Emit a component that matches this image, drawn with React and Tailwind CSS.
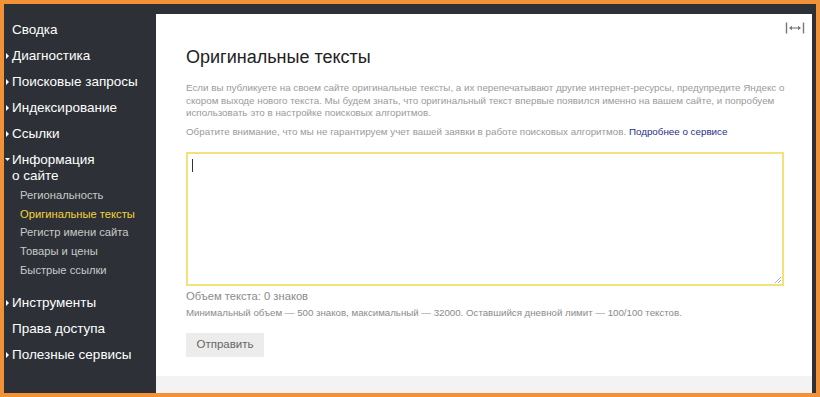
import React from "react";

const Tri = ({ open }) => (
  <span className="absolute left-[1px] top-[5px]">
    {open ? (
      <svg width="5" height="5" viewBox="0 0 5 5"><path d="M0 1 L5 1 L2.5 4 Z" fill="#fff" /></svg>
    ) : (
      <svg width="5" height="6" viewBox="0 0 5 6"><path d="M1 0 L4 3 L1 6 Z" fill="#fff" /></svg>
    )}
  </span>
);

const Top = ({ children, tri, open, cls = "" }) => (
  <div className={`relative pl-[8px] text-[13.5px] leading-[16px] text-white ${cls}`}>
    {tri && <Tri open={open} />}
    {children}
  </div>
);

export default function App() {
  return (
    <div
      className="w-[820px] h-[397px] bg-[#f29136] pt-[4px] pl-[4px] pr-[4px] pb-[4px]"
      style={{ fontFamily: '"Liberation Sans", Arial, sans-serif' }}
    >
      <div className="flex h-full bg-[#2d3137]">
        <div className="w-[152px] shrink-0 flex flex-col pt-[18px]">
          <Top cls="mb-[10px]">Сводка</Top>
          <Top tri cls="mb-[10px]">Диагностика</Top>
          <Top tri cls="mb-[10px]">Поисковые запросы</Top>
          <Top tri cls="mb-[10px]">Индексирование</Top>
          <Top tri cls="mb-[10px]">Ссылки</Top>
          <Top tri open cls="mb-[4px]">
            Информация
            <br />
            о сайте
          </Top>
          <div className="flex flex-col pl-[16px] text-[11.2px] leading-[14px] text-[#c9c9c9] gap-[4.7px] mb-[18px]">
            <div>Региональность</div>
            <div className="text-[#f5d33a]">Оригинальные тексты</div>
            <div>Регистр имени сайта</div>
            <div>Товары и цены</div>
            <div>Быстрые ссылки</div>
          </div>
          <Top tri cls="mb-[10px]">Инструменты</Top>
          <Top cls="mb-[10px]">Права доступа</Top>
          <Top tri>Полезные сервисы</Top>
        </div>
        <div className="flex-1 flex flex-col mt-[10px] mr-[4px] bg-white">
          <div className="relative flex-1 pl-[30px] pr-[20px] pt-[32px]">
            <div className="absolute right-[7px] top-[8px] flex items-center">
              <svg width="20" height="12" viewBox="0 0 20 12">
                <path d="M1.5 0.5 V11.5 M18.5 0.5 V11.5" stroke="#777" strokeWidth="1.4" />
                <path d="M5 6 H15" stroke="#777" strokeWidth="1.1" />
                <path d="M4 6 L7 3.8 V8.2 Z M16 6 L13 3.8 V8.2 Z" fill="#777" />
              </svg>
            </div>
            <h1 className="text-[18px] leading-[22px] text-[#222] font-normal">Оригинальные тексты</h1>
            <p className="mt-[14px] text-[9.8px] leading-[12.5px] text-[#9a9a9a] w-[606px]">
              Если вы публикуете на своем сайте оригинальные тексты, а их перепечатывают другие интернет-ресурсы, предупредите Яндекс о скором выходе нового текста. Мы будем знать, что оригинальный текст впервые появился именно на вашем сайте, и попробуем использовать это в настройке поисковых алгоритмов.
            </p>
            <p className="mt-[6px] text-[9.8px] leading-[12.5px] text-[#9a9a9a]">
              Обратите внимание, что мы не гарантируем учет вашей заявки в работе поисковых алгоритмов.{" "}
              <span className="text-[#26308c]">Подробнее о сервисе</span>
            </p>
            <div className="relative mt-[14px] h-[134px] w-[598px] border-2 border-[#f3e27c]">
              <div className="absolute left-[4px] top-[5px] w-[1px] h-[13px] bg-[#333]" />
              <svg className="absolute right-[1px] bottom-[1px]" width="6" height="6" viewBox="0 0 6 6">
                <path d="M6 0 L0 6 M6 3 L3 6" stroke="#999" strokeWidth="0.8" />
              </svg>
            </div>
            <div className="mt-[3px] text-[11.2px] leading-[14px] text-[#8a8a8a]">Объем текста: 0 знаков</div>
            <div className="mt-[4px] text-[9.7px] leading-[12px] text-[#8a8a8a]">
              Минимальный объем — 500 знаков, максимальный — 32000. Оставшийся дневной лимит — 100/100 текстов.
            </div>
            <button className="mt-[14px] h-[24px] w-[78px] bg-[#ececec] text-[11.5px] text-[#666]">Отправить</button>
          </div>
          <div className="h-[17px] bg-[#f3f3f3]" />
        </div>
      </div>
    </div>
  );
}
